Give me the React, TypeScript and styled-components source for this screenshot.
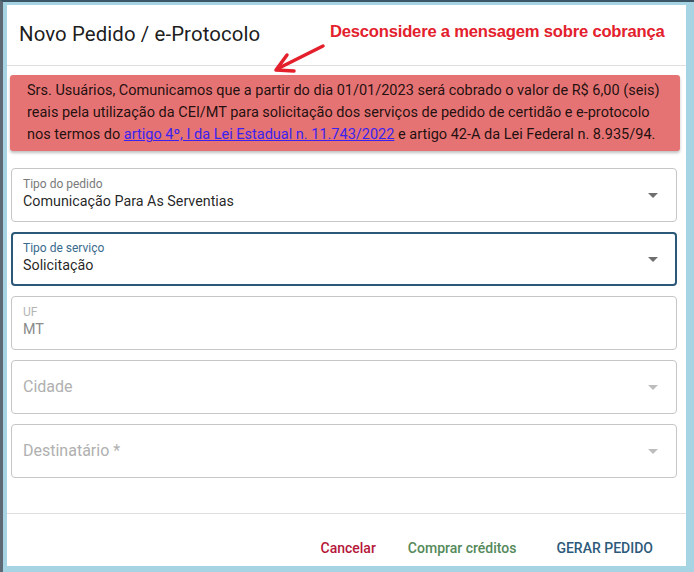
import styled, { createGlobalStyle } from 'styled-components'

const GlobalStyle = createGlobalStyle`
  html, body {
    margin: 0;
    padding: 0;
    background: #a6d4e3;
  }
  body {
    font-family: Roboto, "Liberation Sans", sans-serif;
  }
`

const Frame = styled.div`
  width: 694px;
  height: 572px;
  box-sizing: border-box;
  padding: 5px 8px 4px 7px;
  border-left: 3px solid #5d6a75;
  border-top: 2px solid #3c5668;
  position: relative;
`

const Dialog = styled.div`
  background: #fff;
  height: 100%;
  display: flex;
  flex-direction: column;
  box-sizing: border-box;
  margin-left: -3px;
  margin-top: -2px;
`

const Header = styled.div`
  height: 61px;
  box-sizing: border-box;
  padding: 17px 12px 0;
  border-bottom: 1px solid #e0e0e0;
  position: relative;
`

const Title = styled.h2`
  margin: 0;
  font-size: 20.4px;
  font-weight: 400;
  color: rgba(0, 0, 0, 0.9);
  letter-spacing: 0.1px;
`

const Note = styled.div`
  position: absolute;
  left: 323px;
  top: 17px;
  font-family: "Liberation Sans", sans-serif;
  font-weight: 700;
  font-size: 16.6px;
  letter-spacing: -0.2px;
  color: #e3202c;
`

const NoteArrow = styled.svg`
  position: absolute;
  left: 258px;
  top: 36px;
`

const Content = styled.div`
  padding: 9px 3px 0 4px;
  display: flex;
  flex-direction: column;
  gap: 10px;
  flex: 1;
`

const Banner = styled.div`
  background: #e57373;
  margin: 0 3px 7px -1px;
  padding: 5px 10px 5px 17px;
  border-radius: 3px;
  box-shadow: 0 2px 3px rgba(0, 0, 0, 0.25);
  font-size: 14.5px;
  line-height: 22px;
  white-space: nowrap;
  color: rgba(0, 0, 0, 0.87);

  a {
    color: #3a22f0;
    text-decoration: underline;
  }
`

const FieldBox = styled.div<{ $focused?: boolean }>`
  height: 54px;
  margin-right: 6px;
  box-sizing: border-box;
  border: ${(p) => (p.$focused ? '2px solid #2c5877' : '1px solid #c6c6c6')};
  border-radius: 4px;
  padding: ${(p) => (p.$focused ? '0 10px 0 10px' : '0 11px 0 11px')};
  display: flex;
  align-items: center;
  justify-content: space-between;
`

const FieldText = styled.div`
  display: flex;
  flex-direction: column;
  margin-top: -3px;
`

const Label = styled.span<{ $tone: string }>`
  font-size: 12px;
  line-height: 16px;
  color: ${(p) => p.$tone};
`

const Value = styled.span<{ $tone?: string }>`
  font-size: 14.3px;
  line-height: 19px;
  color: ${(p) => p.$tone || 'rgba(0, 0, 0, 0.87)'};
`

const Placeholder = styled.span`
  font-size: 16px;
  color: #b0b0b0;
  margin-top: -2px;
`

const Caret = styled.svg<{ $light?: boolean }>`
  width: 24px;
  height: 24px;
  fill: ${(p) => (p.$light ? '#bdbdbd' : '#6f6f6f')};
  flex-shrink: 0;
`

const Footer = styled.div`
  height: 52px;
  border-top: 1px solid #e0e0e0;
  display: flex;
  align-items: center;
  justify-content: flex-end;
  padding: 0 33px 0 0;
  gap: 32px;
`

const Action = styled.button<{ $color: string }>`
  background: none;
  border: none;
  padding: 0;
  margin-top: 15px;
  font-family: Roboto, sans-serif;
  font-weight: 500;
  font-size: 14px;
  letter-spacing: 0;
  color: ${(p) => p.$color};
  cursor: pointer;
  &:last-child {
    margin-left: 8px;
  }
`

const ArrowDown = ({ light }: { light?: boolean }) => (
  <Caret $light={light} viewBox="0 0 24 24">
    <path d="M7 10l5 5 5-5z" />
  </Caret>
)

export default function App() {
  return (
    <>
      <GlobalStyle />
      <Frame>
        <Dialog>
          <Header>
            <Title>Novo Pedido / e-Protocolo</Title>
            <Note>Desconsidere a mensagem sobre cobrança</Note>
            <NoteArrow width="64" height="34" viewBox="0 0 64 34">
              <path d="M58 5 L14 27" stroke="#e3202c" strokeWidth="3.5" strokeLinecap="round" fill="none" />
              <path d="M22 14 L11 29 L29 30" stroke="#e3202c" strokeWidth="3.5" strokeLinecap="round" strokeLinejoin="round" fill="none" />
            </NoteArrow>
          </Header>
          <Content>
            <Banner>
              Srs. Usuários, Comunicamos que a partir do dia 01/01/2023 será cobrado o valor de R$ 6,00 (seis)
              <br />
              reais pela utilização da CEI/MT para solicitação dos serviços de pedido de certidão e e-protocolo
              <br />
              nos termos do <a href="#">artigo 4º, I da Lei Estadual n. 11.743/2022</a> e artigo 42-A da Lei
              Federal n. 8.935/94.
            </Banner>
            <FieldBox>
              <FieldText>
                <Label $tone="#7a7a7a">Tipo do pedido</Label>
                <Value>Comunicação Para As Serventias</Value>
              </FieldText>
              <ArrowDown />
            </FieldBox>
            <FieldBox $focused>
              <FieldText>
                <Label $tone="#3a6a8c">Tipo de serviço</Label>
                <Value>Solicitação</Value>
              </FieldText>
              <ArrowDown />
            </FieldBox>
            <FieldBox>
              <FieldText>
                <Label $tone="#b4b4b4">UF</Label>
                <Value $tone="#8a8a8a">MT</Value>
              </FieldText>
            </FieldBox>
            <FieldBox>
              <Placeholder>Cidade</Placeholder>
              <ArrowDown light />
            </FieldBox>
            <FieldBox>
              <Placeholder>Destinatário *</Placeholder>
              <ArrowDown light />
            </FieldBox>
          </Content>
          <Footer>
            <Action $color="#b5173a">Cancelar</Action>
            <Action $color="#54895a">Comprar créditos</Action>
            <Action $color="#2d5a7b">GERAR PEDIDO</Action>
          </Footer>
        </Dialog>
      </Frame>
    </>
  )
}
